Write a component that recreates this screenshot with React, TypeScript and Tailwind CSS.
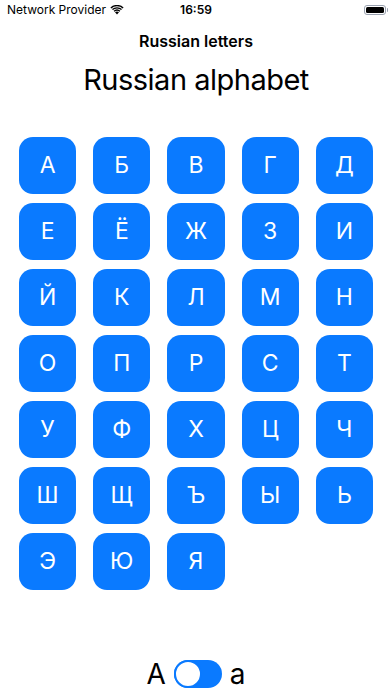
import { useState } from "react";

const letters = [
  "А", "Б", "В", "Г", "Д",
  "Е", "Ё", "Ж", "З", "И",
  "Й", "К", "Л", "М", "Н",
  "О", "П", "Р", "С", "Т",
  "У", "Ф", "Х", "Ц", "Ч",
  "Ш", "Щ", "Ъ", "Ы", "Ь",
  "Э", "Ю", "Я",
];

function StatusBar() {
  return (
    <div className="h-[20px] flex items-center justify-between pl-[7px] pr-[4px] text-[12px] text-black relative">
      <div className="flex items-center gap-[4px]">
        <span>Network Provider</span>
        <svg width="14" height="10" viewBox="0 0 14 10" fill="black">
          <path d="M7 9.6 L5 7.3 A3 3 0 0 1 9 7.3 Z" />
          <path d="M3.6 5.8 A5 5 0 0 1 10.4 5.8 L9.5 6.8 A3.8 3.8 0 0 0 4.5 6.8 Z" />
          <path d="M2 4.1 A7.4 7.4 0 0 1 12 4.1 L11.1 5.1 A6.1 6.1 0 0 0 2.9 5.1 Z" />
          <path d="M0.4 2.4 A9.8 9.8 0 0 1 13.6 2.4 L12.7 3.4 A8.5 8.5 0 0 0 1.3 3.4 Z" />
        </svg>
      </div>
      <span className="absolute left-1/2 -translate-x-1/2 font-semibold">16:59</span>
      <div className="flex items-center">
        <div className="w-[22px] h-[10px] rounded-[3px] border border-gray-400 p-[1px]">
          <div className="w-full h-full rounded-[1.5px] bg-black" />
        </div>
        <div className="w-[1.5px] h-[4px] bg-gray-400 rounded-r-sm ml-[1px]" />
      </div>
    </div>
  );
}

export default function App() {
  const [lower, setLower] = useState(false);

  return (
    <div
      className="w-[392px] h-[696px] bg-white flex flex-col overflow-hidden"
      style={{ fontFamily: "Inter, 'Liberation Sans', sans-serif" }}
    >
      <StatusBar />

      <h2 className="mt-[11px] text-center text-[16px] font-semibold leading-[20px] text-black">
        Russian letters
      </h2>
      <h1 className="mt-[11px] text-center text-[29px] font-normal leading-[36px] text-black tracking-[-0.5px]">
        Russian alphabet
      </h1>

      <div className="mt-[39px] px-[19px] grid grid-cols-5 gap-x-[17px] gap-y-[9px]">
        {letters.map((l) => (
          <button
            key={l}
            type="button"
            className="h-[57px] rounded-[14px] bg-[#0a7aff] text-white text-[23px] font-normal flex items-center justify-center"
          >
            {lower ? l.toLowerCase() : l}
          </button>
        ))}
      </div>

      <div className="mt-auto mb-[5px] flex items-center justify-center gap-[8px] text-black">
        <span className="text-[28px] leading-[34px]">A</span>
        <button
          type="button"
          onClick={() => setLower(!lower)}
          className={
            "w-[48px] h-[28px] rounded-full bg-[#0a7aff] flex items-center " +
            (lower ? "justify-end" : "justify-start")
          }
        >
          <span className="w-[28px] h-[28px] rounded-full bg-white border-2 border-[#0a7aff]" />
        </button>
        <span className="text-[28px] leading-[34px]">a</span>
      </div>
    </div>
  );
}
